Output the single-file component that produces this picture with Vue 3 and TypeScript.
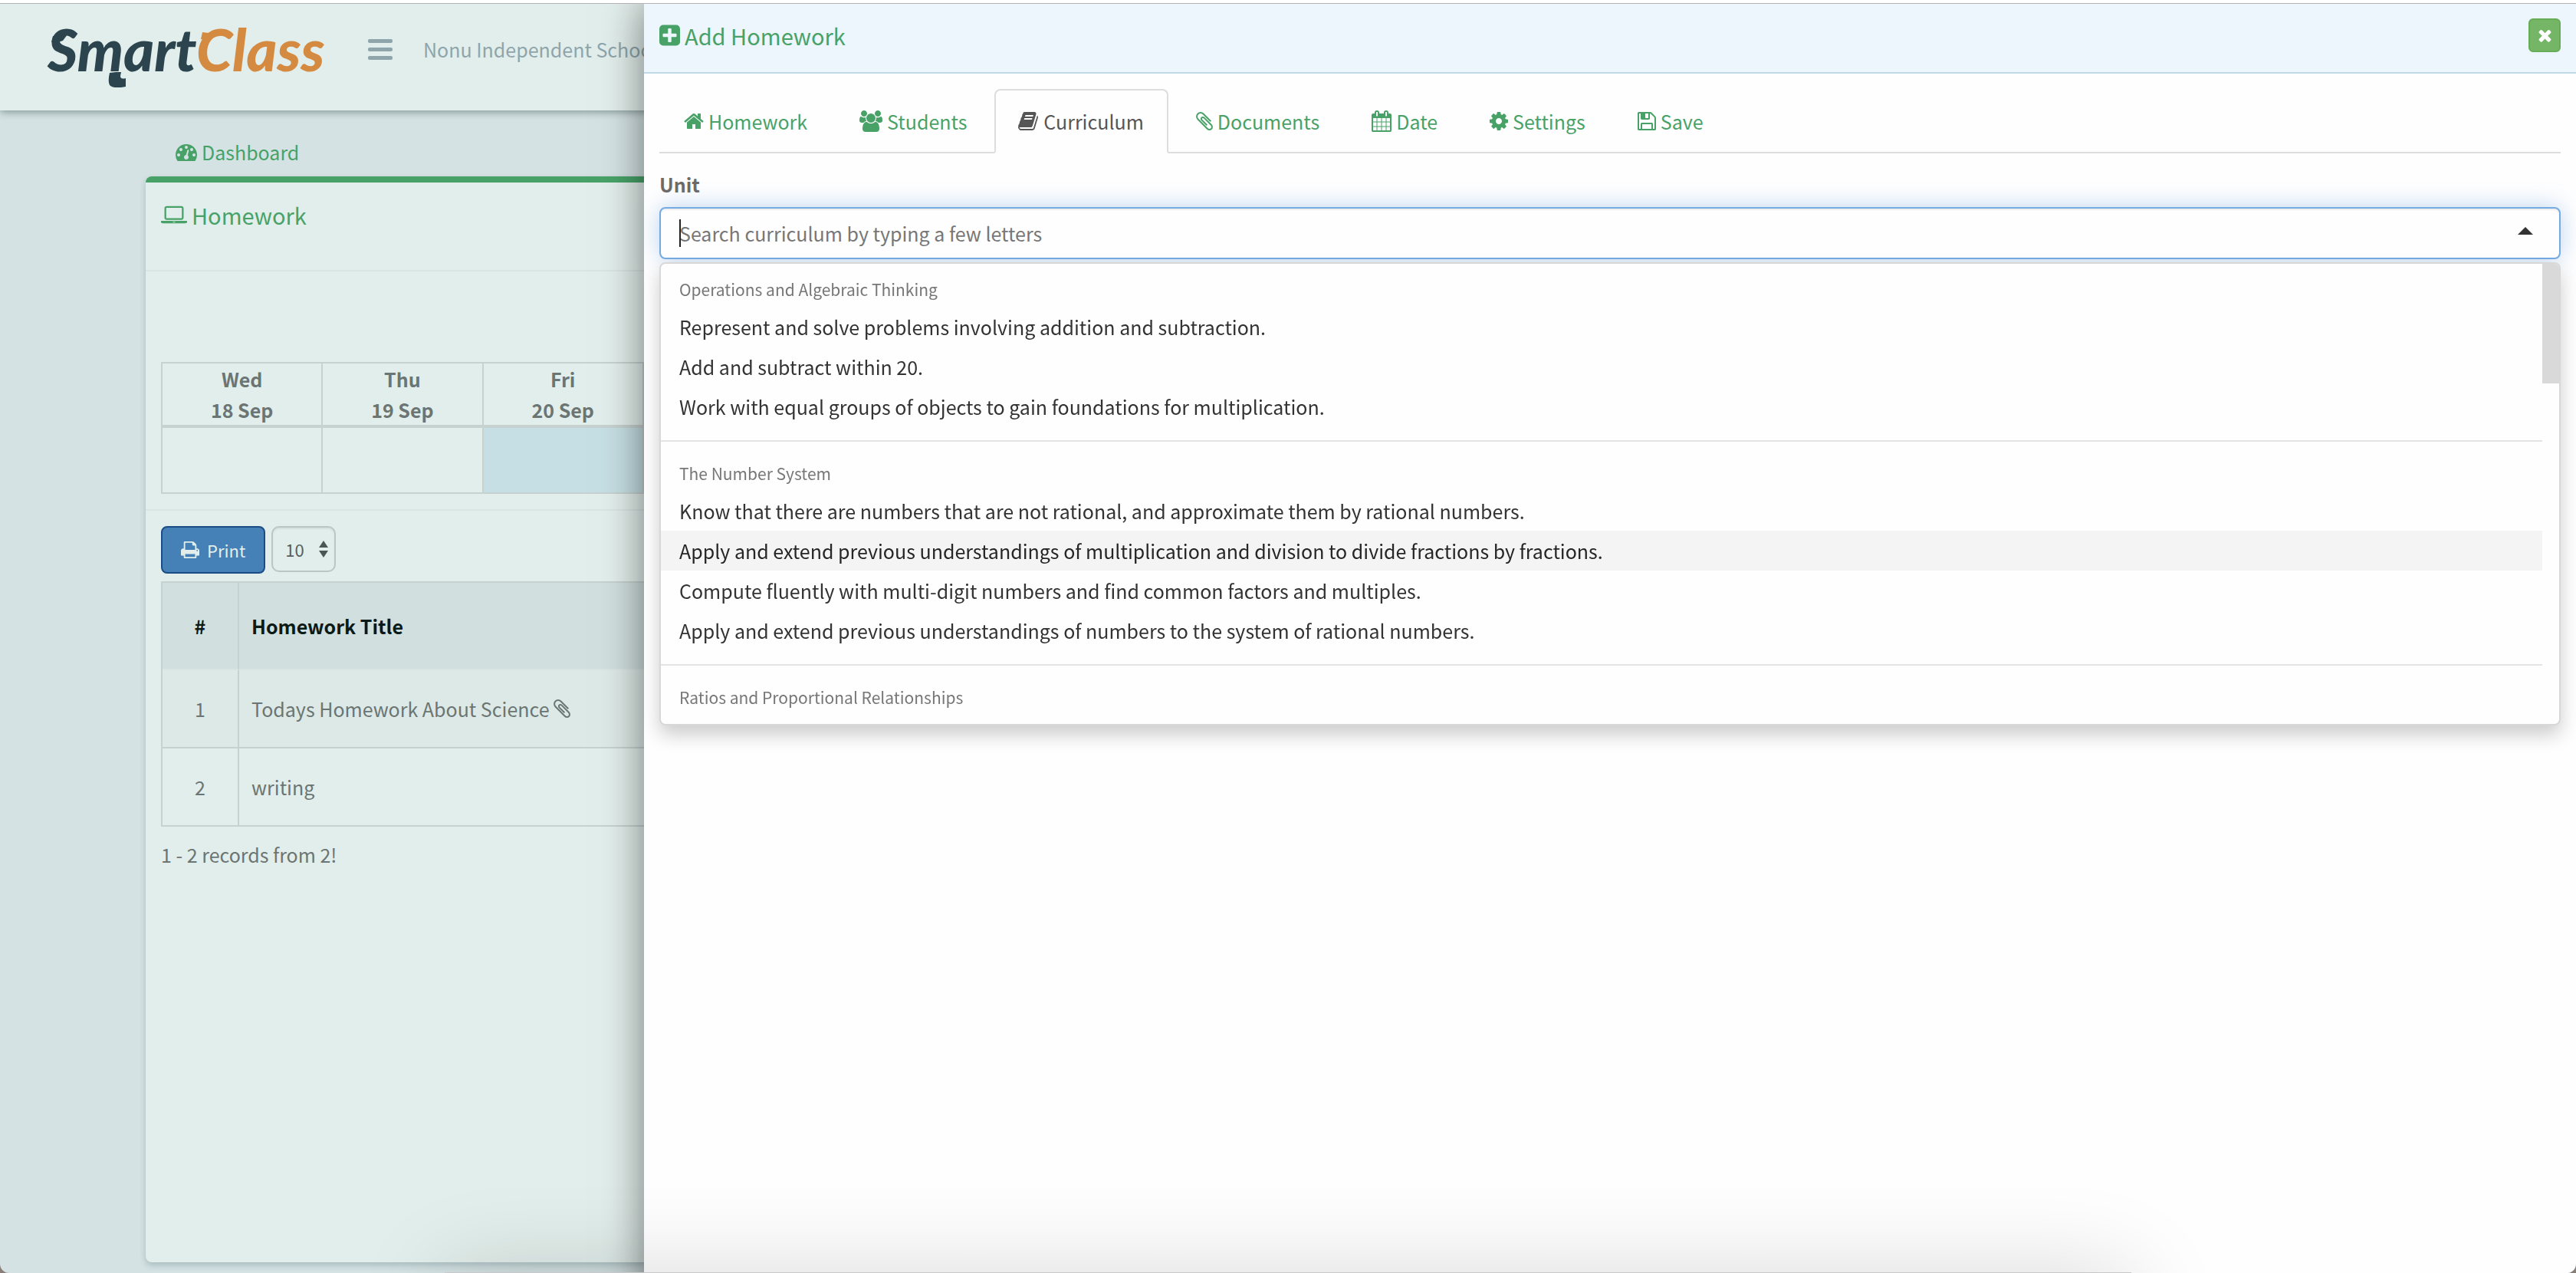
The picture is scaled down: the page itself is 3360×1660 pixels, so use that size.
<script setup lang="ts">
import { h, ref, onMounted } from 'vue'

// Glyphs on a 1792-unit grid: [left edge, advance width, path]
const glyphs: Record<string, [number, number, string]> = {
  home: [64, 1664, 'M1472 992v480q0 26-19 45t-45 19h-384v-384h-256v384h-384q-26 0-45-19t-19-45v-480q0-1 .5-3t.5-3l575-474 575 474q1 2 1 6zm223-69l-62 74q-8 9-21 11h-3q-13 0-21-7l-692-577-692 577q-12 8-24 7-13-2-21-11l-62-74q-8-10-7-23.5t11-21.5l719-599q32-26 76-26t76 26l244 204v-195q0-14 9-23t23-9h192q14 0 23 9t9 23v408l219 182q10 8 11 21.5t-7 23.5z'],
  plus: [128, 1536, 'M1408 960v-128q0-26-19-45t-45-19h-320v-320q0-26-19-45t-45-19h-128q-26 0-45 19t-19 45v320h-320q-26 0-45 19t-19 45v128q0 26 19 45t45 19h320v320q0 26 19 45t45 19h128q26 0 45-19t19-45v-320h320q26 0 45-19t19-45zm256-544v960q0 119-84.5 203.5t-203.5 84.5h-960q-119 0-203.5-84.5t-84.5-203.5v-960q0-119 84.5-203.5t203.5-84.5h960q119 0 203.5 84.5t84.5 203.5z'],
  times: [192, 1408, 'M1490 1322q0 40-28 68l-136 136q-28 28-68 28t-68-28l-294-294-294 294q-28 28-68 28t-68-28l-136-136q-28-28-28-68t28-68l294-294-294-294q-28-28-28-68t28-68l136-136q28-28 68-28t68 28l294 294 294-294q28-28 68-28t68 28l136 136q28 28 28 68t-28 68l-294 294 294 294q28 28 28 68z'],
  cog: [128, 1536, 'M1152 896q0-106-75-181t-181-75-181 75-75 181 75 181 181 75 181-75 75-181zm512-109v222q0 12-8 23t-20 13l-185 28q-19 54-39 91 35 50 107 138 10 12 10 25t-9 23q-27 37-99 108t-94 71q-12 0-26-9l-138-108q-44 23-91 38-16 136-29 186-7 28-36 28h-222q-14 0-24.5-8.5t-11.5-21.5l-28-184q-49-16-90-37l-141 107q-10 9-25 9-14 0-25-11-126-114-165-168-7-10-7-23 0-12 8-23 15-21 51-66.5t54-70.5q-27-50-41-99l-183-27q-13-2-21-12.5t-8-23.5v-222q0-12 8-23t19-13l186-28q14-46 39-92-40-57-107-138-10-12-10-24 0-10 9-23 26-36 98.5-107.5t94.5-71.5q13 0 26 10l138 107q44-23 91-38 16-136 29-186 7-28 36-28h222q14 0 24.5 8.5t11.5 21.5l28 184q49 16 90 37l142-107q9-9 24-9 13 0 25 10 129 119 165 170 7 8 7 22 0 12-8 23-15 21-51 66.5t-54 70.5q26 50 41 98l183 28q13 2 21 12.5t8 23.5z'],
  clip: [192, 1408, 'M1596 1385q0 117-79 196t-196 79q-135 0-235-100l-777-776q-113-115-113-271 0-159 110-270t269-111q158 0 273 113l605 606q10 10 10 22 0 16-30.5 46.5t-46.5 30.5q-13 0-23-10l-606-607q-79-77-181-77-106 0-179 75t-73 181q0 105 76 181l776 777q63 63 145 63 64 0 106-42t42-106q0-82-63-145l-581-581q-26-24-60-24-29 0-48 19t-19 48q0 32 25 59l410 410q10 10 10 22 0 16-31 47t-47 31q-12 0-22-10l-410-410q-63-61-63-149 0-82 57-139t139-57q88 0 149 63l581 581q100 98 100 235z'],
  save: [128, 1536, 'M512 1536h768v-384h-768v384zm896 0h128v-896q0-14-10-38.5t-20-34.5l-281-281q-10-10-34-20t-39-10v416q0 40-28 68t-68 28h-576q-40 0-68-28t-28-68v-416h-128v1280h128v-416q0-40 28-68t68-28h832q40 0 68 28t28 68v416zm-384-928v-320q0-13-9.5-22.5t-22.5-9.5h-192q-13 0-22.5 9.5t-9.5 22.5v320q0 13 9.5 22.5t22.5 9.5h192q13 0 22.5-9.5t9.5-22.5zm640 32v928q0 40-28 68t-68 28h-1344q-40 0-68-28t-28-68v-1344q0-40 28-68t68-28h928q40 0 88 20t76 48l280 280q28 28 48 76t20 88z'],
  calendar: [64, 1664, 'M192 1664h288v-288h-288v288zm352 0h320v-288h-320v288zm-352-352h288v-320h-288v320zm352 0h320v-320h-320v320zm-352-384h288v-288h-288v288zm736 736h320v-288h-320v288zm-384-736h320v-288h-320v288zm768 736h288v-288h-288v288zm-384-352h320v-320h-320v320zm-352-864v-288q0-13-9.5-22.5t-22.5-9.5h-64q-13 0-22.5 9.5t-9.5 22.5v288q0 13 9.5 22.5t22.5 9.5h64q13 0 22.5-9.5t9.5-22.5zm736 864h288v-320h-288v320zm-384-384h320v-288h-320v288zm384 0h288v-288h-288v288zm32-480v-288q0-13-9.5-22.5t-22.5-9.5h-64q-13 0-22.5 9.5t-9.5 22.5v288q0 13 9.5 22.5t22.5 9.5h64q13 0 22.5-9.5t9.5-22.5zm384-64v1280q0 52-38 90t-90 38h-1408q-52 0-90-38t-38-90v-1280q0-52 38-90t90-38h128v-96q0-66 47-113t113-47h64q66 0 113 47t47 113v96h384v-96q0-66 47-113t113-47h64q66 0 113 47t47 113v96h128q52 0 90 38t38 90z'],
  laptop: [0, 1920, 'M416 1280q-66 0-113-47t-47-113v-704q0-66 47-113t113-47h1088q66 0 113 47t47 113v704q0 66-47 113t-113 47h-1088zm-32-864v704q0 13 9.5 22.5t22.5 9.5h1088q13 0 22.5-9.5t9.5-22.5v-704q0-13-9.5-22.5t-22.5-9.5h-1088q-13 0-22.5 9.5t-9.5 22.5zm1376 928h160v96q0 40-47 68t-113 28h-1600q-66 0-113-28t-47-68v-96h1760zm-720 96q16 0 16-16t-16-16h-160q-16 0-16 16t16 16h160z'],
  book: [64, 1664, 'M1639 478q40 57 18 129l-275 906q-19 64-76.5 107.5t-122.5 43.5h-923q-77 0-148.5-53.5t-99.5-131.5q-24-67-2-127 0-4 3-27t4-37q1-8-3-21.5t-3-19.5q2-11 8-21t16.5-23.5 16.5-23.5q23-38 45-91.5t30-91.5q3-10 .5-30t-.5-28q3-11 17-28t17-23q21-36 42-92t25-90q1-9-2.5-32t.5-28q4-13 22-30.5t22-22.5q19-26 42.5-84.5t27.5-96.5q1-8-3-25.5t-2-26.5q2-8 9-18t18-23 17-21q8-12 16.5-30.5t15-35 16-36 19.5-32 26.5-23.5 36-11.5 47.5 5.5l-1 3q38-9 51-9h761q74 0 114 56t18 130l-274 906q-36 119-71.5 153.5t-128.5 34.5h-869q-27 0-38 15-11 16-1 43 24 70 144 70h923q29 0 56-15.5t35-41.5l300-987q7-22 5-57 38 15 59 43zm-1064 2q-4 13 2 22.5t20 9.5h608q13 0 25.5-9.5t16.5-22.5l21-64q4-13-2-22.5t-20-9.5h-608q-13 0-25.5 9.5t-16.5 22.5zm-83 256q-4 13 2 22.5t20 9.5h608q13 0 25.5-9.5t16.5-22.5l21-64q4-13-2-22.5t-20-9.5h-608q-13 0-25.5 9.5t-16.5 22.5z'],
  users: [-64, 1920, 'M529 896q-162 5-265 128h-134q-82 0-138-40.5t-56-118.5q0-353 124-353 6 0 43.5 21t97.5 42.5 119 21.5q67 0 133-23-5 37-5 66 0 139 81 256zm1071 637q0 120-73 189.5t-194 69.5h-874q-121 0-194-69.5t-73-189.5q0-53 3.5-103.5t14-109 26.5-108.5 43-97.5 62-81 85.5-53.5 111.5-20q10 0 43 21.5t73 48 107 48 135 21.5 135-21.5 107-48 73-48 43-21.5q61 0 111.5 20t85.5 53.5 62 81 43 97.5 26.5 108.5 14 109 3.5 103.5zm-1024-1277q0 106-75 181t-181 75-181-75-75-181 75-181 181-75 181 75 75 181zm704 384q0 159-112.5 271.5t-271.5 112.5-271.5-112.5-112.5-271.5 112.5-271.5 271.5-112.5 271.5 112.5 112.5 271.5zm576 225q0 78-56 118.5t-138 40.5h-134q-103-123-265-128 81-117 81-256 0-29-5-66 66 23 133 23 59 0 119-21.5t97.5-42.5 43.5-21q124 0 124 353zm-128-609q0 106-75 181t-181 75-181-75-75-181 75-181 181-75 181 75 75 181z'],
  print: [64, 1664, 'M448 1536h896v-256h-896v256zm0-640h896v-384h-160q-40 0-68-28t-28-68v-160h-640v640zm1152 64q0-26-19-45t-45-19-45 19-19 45 19 45 45 19 45-19 19-45zm128 0v416q0 13-9.5 22.5t-22.5 9.5h-224v160q0 40-28 68t-68 28h-960q-40 0-68-28t-28-68v-160h-224q-13 0-22.5-9.5t-9.5-22.5v-416q0-79 56.5-135.5t135.5-56.5h64v-544q0-40 28-68t68-28h672q40 0 88 20t76 48l152 152q28 28 48 76t20 88v256h64q79 0 135.5 56.5t56.5 135.5z'],
  gauge: [0, 1792, 'M384 1152q0-53-37.5-90.5t-90.5-37.5-90.5 37.5-37.5 90.5 37.5 90.5 90.5 37.5 90.5-37.5 37.5-90.5zm192-448q0-53-37.5-90.5t-90.5-37.5-90.5 37.5-37.5 90.5 37.5 90.5 90.5 37.5 90.5-37.5 37.5-90.5zm428 481l101-382q6-26-7.5-48.5t-38.5-29.5-48 6.5-30 39.5l-101 382q-60 5-107 43.5t-63 98.5q-20 77 20 146t117 89 146-20 89-117q16-60-6-117t-72-91zm660-33q0-53-37.5-90.5t-90.5-37.5-90.5 37.5-37.5 90.5 37.5 90.5 90.5 37.5 90.5-37.5 37.5-90.5zm-640-640q0-53-37.5-90.5t-90.5-37.5-90.5 37.5-37.5 90.5 37.5 90.5 90.5 37.5 90.5-37.5 37.5-90.5zm448 192q0-53-37.5-90.5t-90.5-37.5-90.5 37.5-37.5 90.5 37.5 90.5 90.5 37.5 90.5-37.5 37.5-90.5zm320 448q0 261-141 483-19 29-54 29h-1402q-35 0-54-29-141-221-141-483 0-182 71-348t191-286 286-191 348-71 348 71 286 191 191 286 71 348z'],
}

const Icon = (props: { name: string; size: number }) => {
  const [x, width, d] = glyphs[props.name]
  return h(
    'svg',
    {
      viewBox: `${x} 0 ${width} 1792`,
      width: Math.round((props.size * width) / 1792),
      height: props.size,
      fill: 'currentColor',
      'aria-hidden': 'true',
      style: { flex: 'none', overflow: 'visible' },
    },
    [h('path', { d })],
  )
}
Icon.props = ['name', 'size']

const tabs = [
  { icon: 'home', label: 'Homework' },
  { icon: 'users', label: 'Students' },
  { icon: 'book', label: 'Curriculum' },
  { icon: 'clip', label: 'Documents' },
  { icon: 'calendar', label: 'Date' },
  { icon: 'cog', label: 'Settings' },
  { icon: 'save', label: 'Save' },
]
const activeTab = ref('Curriculum')

const groups = [
  {
    title: 'Operations and Algebraic Thinking',
    options: [
      'Represent and solve problems involving addition and subtraction.',
      'Add and subtract within 20.',
      'Work with equal groups of objects to gain foundations for multiplication.',
    ],
  },
  {
    title: 'The Number System',
    options: [
      'Know that there are numbers that are not rational, and approximate them by rational numbers.',
      'Apply and extend previous understandings of multiplication and division to divide fractions by fractions.',
      'Compute fluently with multi-digit numbers and find common factors and multiples.',
      'Apply and extend previous understandings of numbers to the system of rational numbers.',
    ],
  },
  { title: 'Ratios and Proportional Relationships', options: [] as string[] },
]
const highlighted = ref(groups[1].options[1])

const days = [
  { day: 'Wed', date: '18 Sep', today: false },
  { day: 'Thu', date: '19 Sep', today: false },
  { day: 'Fri', date: '20 Sep', today: true },
]
const rows = [
  { id: 1, title: 'Todays Homework About Science', attached: true },
  { id: 2, title: 'writing', attached: false },
]
const pageSize = ref('10')
const search = ref('')
const searchBox = ref<HTMLInputElement | null>(null)
onMounted(() => searchBox.value?.focus())
</script>

<template>
  <div class="screen">
    <div class="page">
      <header class="topbar">
        <a class="logo" href="#">
          <span class="smart">Smart</span><span class="class">Class</span>
          <svg class="swash" viewBox="0 0 360 76" width="360" height="76" aria-hidden="true">
            <path fill="#2b444e" d="M7 9l-2 8q10 0 15-2l6-8-13 2zM89 56l-8 1q-3 13 1 17 6 4 20 1v-11q-7 2-7-3l1-5z" />
            <path fill="#d58a41" d="M202 4l-2 9q10 1 18-3l6-6q-10 2-22 0z" />
          </svg>
        </a>
        <button class="menu" type="button" aria-label="Menu"><i></i><i></i><i></i></button>
        <span class="school">Nonu Independent School</span>
      </header>

      <nav class="crumbs"><a href="#"><Icon name="gauge" :size="28" />Dashboard</a></nav>

      <main class="card">
        <h1 class="card-title"><Icon name="laptop" :size="32" />Homework</h1>
        <section class="calendar">
          <table>
            <thead>
              <tr>
                <th v-for="d in days" :key="d.date">{{ d.day }}<br />{{ d.date }}</th>
                <th class="rest"></th>
              </tr>
            </thead>
            <tbody>
              <tr>
                <td v-for="d in days" :key="d.date" :class="{ today: d.today }"></td>
                <td></td>
              </tr>
            </tbody>
          </table>
        </section>
        <section class="records">
          <div class="tools">
            <button class="print" type="button"><Icon name="print" :size="26" />Print</button>
            <span class="page-size">
              <select v-model="pageSize" aria-label="Records per page">
                <option>10</option>
                <option>25</option>
                <option>50</option>
              </select>
              <svg viewBox="0 0 12 22" width="12" height="22" aria-hidden="true"><path d="M6 0l6 9H0zM6 22l6-9H0z" /></svg>
            </span>
          </div>
          <table>
            <thead>
              <tr><th class="num">#</th><th>Homework Title</th></tr>
            </thead>
            <tbody>
              <tr v-for="r in rows" :key="r.id">
                <td class="num">{{ r.id }}</td>
                <td><span class="cell">{{ r.title }}<Icon v-if="r.attached" name="clip" :size="28" /></span></td>
              </tr>
            </tbody>
          </table>
          <p class="count">1 - 2 records from 2!</p>
        </section>
      </main>
    </div>

    <aside class="drawer">
      <header class="drawer-head">
        <h2><Icon name="plus" :size="32" />Add Homework</h2>
        <button class="close" type="button" aria-label="Close"><Icon name="times" :size="24" /></button>
      </header>
      <div class="drawer-body">
        <nav class="tabs">
          <a
            v-for="t in tabs"
            :key="t.label"
            href="#"
            :class="{ active: t.label === activeTab }"
            @click.prevent="activeTab = t.label"
          ><Icon :name="t.icon" :size="28" />{{ t.label }}</a>
        </nav>
        <label class="unit" for="unit">Unit</label>
        <div class="combo">
          <input
            id="unit"
            ref="searchBox"
            v-model="search"
            type="text"
            role="combobox"
            aria-expanded="true"
            aria-controls="unit-list"
            autocomplete="off"
            placeholder="Search curriculum by typing a few letters"
          />
          <i class="caret"></i>
          <i class="arrow"></i>
          <div class="dropdown">
            <div id="unit-list" class="list" role="listbox">
              <div v-for="g in groups" :key="g.title" class="group" role="group">
                <div class="group-title">{{ g.title }}</div>
                <div
                  v-for="o in g.options"
                  :key="o"
                  role="option"
                  class="option"
                  :class="{ on: o === highlighted }"
                  @mouseenter="highlighted = o"
                >{{ o }}</div>
              </div>
            </div>
            <div class="track"><div class="thumb"></div></div>
          </div>
        </div>
      </div>
    </aside>
    <div class="dock-shadow"></div>
  </div>
</template>

<style>
body {
  background: #8a7f78;
}
</style>

<style scoped>
* {
  box-sizing: border-box;
}
.screen {
  position: relative;
  display: flex;
  min-height: 100vh;
  padding-top: 4px;
  overflow: hidden;
  border-radius: 0 0 12px 12px;
  background: #d4e2e3;
  font-family: 'Noto Sans CJK SC', 'Noto Sans', sans-serif;
  font-size: 25px;
  line-height: 40px;
  color: #6b7573;
}
/* Window edge above the page: white with a hairline under it */
.screen::before {
  content: '';
  position: absolute;
  z-index: 5;
  top: 0;
  left: 0;
  right: 0;
  height: 4px;
  border-bottom: 1px solid #b3b3b6;
  background: #fff;
}
h1,
h2,
p {
  margin: 0;
}
h1,
h2 {
  font-size: 29px;
  font-weight: 400;
  line-height: 44px;
  color: #48a268;
  display: flex;
  align-items: center;
  gap: 6px;
}
a {
  color: inherit;
  text-decoration: none;
}
button,
select,
input {
  font: inherit;
  margin: 0;
}

.page {
  flex: 1;
  display: flex;
  flex-direction: column;
}
.topbar {
  display: flex;
  align-items: center;
  height: 140px;
  padding: 0 0 20px 62px;
  background: #e2eeeb;
  box-shadow: 0 2px 10px rgba(0, 30, 30, 0.4);
  color: #8ea5ab;
}
.logo {
  position: relative;
  width: 418px;
  font: italic 900 76px/100px Lato, sans-serif;
  white-space: nowrap;
}
.smart {
  color: #2b444e;
}
.class {
  color: #d58a41;
}
.swash {
  position: absolute;
  top: 24px;
  left: 0;
}
.menu {
  display: flex;
  flex-direction: column;
  gap: 6px;
  width: 32px;
  margin-right: 40px;
  padding: 0;
  border: 0;
  background: none;
}
.menu i {
  height: 5px;
  border-radius: 2px;
  background: #8ea5ab;
}

.crumbs {
  display: flex;
  padding: 34px 0 12px 229px;
}
.crumbs a {
  display: inline-flex;
  align-items: center;
  gap: 6px;
  height: 40px;
  color: #48a268;
}
.card {
  flex: 1;
  margin: 0 208px 14px 190px;
  border-top: 8px solid #48a268;
  border-radius: 8px;
  background: #e2eeeb;
  box-shadow: 0 4px 8px rgba(0, 40, 50, 0.2);
}
.card-title {
  height: 116px;
  padding: 20px 20px 50px;
  border-bottom: 2px solid #d9e5e3;
}
.calendar {
  padding: 118px 20px 20px;
  border-bottom: 2px solid #d9e5e3;
}
table {
  width: 100%;
  border-collapse: separate;
  border-spacing: 0;
  table-layout: fixed;
  border: solid #c6d2cf;
  border-width: 2px 0 0 2px;
}
th,
td {
  padding: 0;
  border: solid #c6d2cf;
  border-width: 0 2px 2px 0;
}
.calendar th {
  height: 84px;
  border-bottom-width: 4px;
}
.calendar .rest {
  width: 78.5%;
}
.calendar td {
  height: 86px;
}
.today {
  background: #c6dfe4;
}
.records {
  padding: 20px;
}
.tools {
  display: flex;
  align-items: flex-start;
  gap: 8px;
  margin-bottom: 10px;
}
.print {
  display: flex;
  align-items: center;
  gap: 10px;
  height: 62px;
  padding: 0 24px;
  border: 2px solid #1c4c86;
  border-radius: 8px;
  background: #4580b7;
  color: #e2eeeb;
  font-size: 22px;
}
.page-size {
  display: grid;
  align-items: center;
}
.page-size select {
  grid-area: 1 / 1;
  width: 84px;
  height: 60px;
  padding: 0 16px;
  border: 2px solid #b9c6c3;
  border-radius: 10px;
  appearance: none;
  background: transparent;
  box-shadow: inset 0 2px 2px rgba(0, 0, 0, 0.06);
  color: #56605e;
  font-size: 22px;
}
.page-size svg {
  grid-area: 1 / 1;
  justify-self: end;
  margin-right: 10px;
  fill: #4c5654;
  pointer-events: none;
}
.records th {
  height: 114px;
  padding: 0 16px;
  border-bottom-color: #d9e5e3;
  background: #d1dfdf;
  color: #0a1a17;
  text-align: left;
}
.records td {
  height: 102px;
  padding: 0 16px;
}
.records tbody tr:first-child {
  background: #dde9e6;
}
.records .num {
  width: 100px;
  text-align: center;
}
.cell {
  display: flex;
  align-items: center;
  gap: 6px;
}
.count {
  margin-top: 16px;
}

.drawer {
  position: absolute;
  top: 4px;
  right: 0;
  bottom: -60px;
  width: 75%;
  background: #fefefe;
  box-shadow: 0 0 50px rgba(0, 0, 0, 0.5);
}
.drawer-head {
  display: flex;
  justify-content: space-between;
  height: 92px;
  padding: 20px 20px 0;
  border-bottom: 2px solid #c0dae8;
  background: #edf5fd;
}
.drawer-head h2 {
  height: 44px;
}
.close {
  display: flex;
  align-items: center;
  justify-content: center;
  width: 42px;
  height: 44px;
  padding: 0;
  border: 2px solid #67ad58;
  border-radius: 6px;
  background: #75b566;
  color: #fff;
}
.drawer-body {
  padding: 20px;
}
.tabs {
  display: flex;
  gap: 4px;
  border-bottom: 2px solid #ddd;
  color: #48a268;
}
.tabs a {
  display: flex;
  align-items: center;
  gap: 6px;
  height: 84px;
  margin-bottom: -2px;
  padding: 0 30px;
  border: 2px solid transparent;
  border-radius: 8px 8px 0 0;
}
.tabs .active {
  border-color: #ddd #ddd #fefefe;
  background: #fefefe;
  color: #555;
}
.unit {
  display: block;
  margin: 20px 0 10px;
  font-weight: 700;
  color: #6e6a68;
}
.combo {
  position: relative;
}
.combo input {
  display: block;
  width: 100%;
  height: 68px;
  padding: 0 24px;
  border: 2px solid #74abe2;
  border-radius: 8px;
  outline: 0;
  background: #fefefe;
  box-shadow: inset 0 2px 2px rgba(0, 0, 0, 0.07), 0 0 30px rgba(90, 150, 220, 0.4);
  color: #333;
  caret-color: transparent;
}
.combo input::placeholder {
  color: #777;
  opacity: 1;
}
.caret {
  position: absolute;
  top: 16px;
  left: 26px;
  width: 2px;
  height: 36px;
  background: #222;
}
.arrow {
  position: absolute;
  top: 26px;
  right: 36px;
  border: solid transparent;
  border-width: 0 10px 10px;
  border-bottom-color: #333;
}
.dropdown {
  position: absolute;
  top: 72px;
  left: 0;
  right: 0;
  display: flex;
  height: 604px;
  border: 2px solid #d8d8d8;
  border-radius: 8px;
  overflow: hidden;
  background: #fefefe;
  box-shadow: 0 12px 24px rgba(0, 0, 0, 0.2);
}
.list {
  flex: 1;
  padding-top: 10px;
  overflow: hidden;
}
.group + .group {
  margin-top: 18px;
  padding-top: 18px;
  border-top: 2px solid #e4e4e4;
}
.group-title {
  padding: 3px 24px;
  font-size: 21px;
  color: #777;
}
.option {
  padding: 6px 24px;
  color: #333;
}
.option.on {
  background: #f4f4f4;
  color: #262626;
}
.track {
  width: 22px;
}
.thumb {
  height: 156px;
  background: #d9d9d9;
}
.dock-shadow {
  position: absolute;
  left: 580px;
  right: 580px;
  bottom: -199px;
  height: 200px;
  background: #c8c8c8;
  box-shadow: 0 0 120px rgba(0, 0, 0, 0.15);
  pointer-events: none;
}
</style>
